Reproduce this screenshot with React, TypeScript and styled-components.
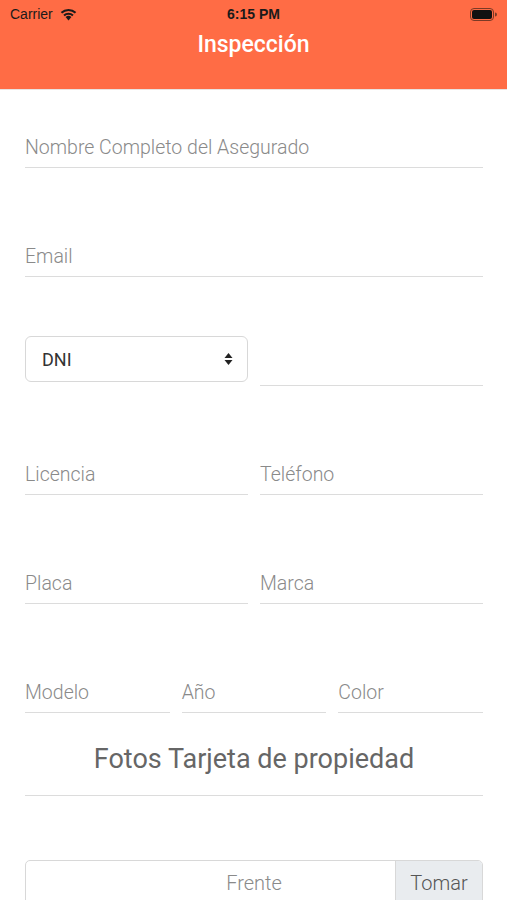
import React from 'react';
import styled, { createGlobalStyle } from 'styled-components';

const GlobalStyle = createGlobalStyle`
    html, body {
        margin: 0;
        padding: 0;
        background: #fff;
        font-family: Roboto, "Noto Sans", sans-serif;
    }
    * { box-sizing: border-box; }
`

const Page = styled.div`
    width: 507px;
    height: 900px;
    overflow: hidden;
    background: #fff;
`

const Header = styled.header`
    height: 90px;
    background: #ff6c45;
    border-bottom: 1px solid #e8e3e0;
    display: flex;
    flex-direction: column;
`

const StatusBar = styled.div`
    height: 28px;
    display: grid;
    grid-template-columns: 1fr auto 1fr;
    align-items: center;
    padding: 0 10px;
    color: #1a1a1a;
    font-family: "Liberation Sans", Arial, sans-serif;
    font-size: 14px;
    .left{
        display: flex;
        align-items: center;
        gap: 6px;
    }
    .time{
        font-weight: 700;
    }
    .right{
        display: flex;
        justify-content: flex-end;
    }
`

const Title = styled.h1`
    margin: 0;
    text-align: center;
    color: #fff;
    font-size: 23px;
    font-weight: 500;
    line-height: 34px;
`

const Form = styled.div`
    padding: 0 24px 0 25px;
`

const Row = styled.div<{ $cols: number; $top?: number }>`
    display: grid;
    grid-template-columns: repeat(${p => p.$cols}, 1fr);
    column-gap: 12px;
    align-items: end;
    margin-top: ${p => p.$top ?? 68}px;
`

const Field = styled.div`
    height: 41px;
    border-bottom: 1px solid #dcdcdc;
    display: flex;
    align-items: center;
    color: #8a8a8a;
    font-size: 19.5px;
    font-weight: 300;
    white-space: nowrap;
`

const Select = styled.div`
    height: 46px;
    margin-bottom: 4px;
    border: 1px solid #d8d8d8;
    border-radius: 6px;
    display: flex;
    align-items: center;
    justify-content: space-between;
    padding: 0 14px 0 16px;
    color: #333;
    font-size: 18px;
`

const SectionTitle = styled.h2`
    margin: 30px 0 0;
    padding-bottom: 20px;
    border-bottom: 1px solid #dcdcdc;
    text-align: center;
    color: #666;
    font-size: 27px;
    line-height: 32px;
    font-weight: 400;
`

const PhotoInput = styled.div`
    margin-top: 64px;
    height: 46px;
    border: 1px solid #d8d8d8;
    border-radius: 5px;
    display: flex;
    overflow: hidden;
    font-size: 20px;
    font-weight: 300;
    .name{
        flex: 1;
        display: flex;
        align-items: center;
        justify-content: center;
        padding-left: 87px;
        color: #8a8a8a;
    }
    .btn{
        width: 87px;
        background: #e9ecef;
        border-left: 1px solid #d8d8d8;
        display: flex;
        align-items: center;
        justify-content: center;
        color: #555;
    }
`

const Wifi = () => (
    <svg width="19" height="14" viewBox="0 0 17 13">
        <path d="M8.5 12.5 L5.8 9.4 A4 4 0 0 1 11.2 9.4 Z" fill="#1a1a1a" />
        <path d="M3.7 7.2 A7 7 0 0 1 13.3 7.2 L12 8.6 A5.2 5.2 0 0 0 5 8.6 Z" fill="#1a1a1a" />
        <path d="M1.3 4.6 A10.5 10.5 0 0 1 15.7 4.6 L14.4 6 A8.6 8.6 0 0 0 2.6 6 Z" fill="#1a1a1a" />
    </svg>
)

const Battery = () => (
    <svg width="27" height="13" viewBox="0 0 27 13">
        <rect x="0.5" y="0.5" width="23" height="12" rx="3.5" fill="none" stroke="#7a3a26" strokeWidth="1" />
        <rect x="2" y="2" width="20" height="9" rx="2" fill="#111" />
        <path d="M25 4.5 a1.8 1.8 0 0 1 0 4 Z" fill="#7a3a26" />
    </svg>
)

const Arrows = () => (
    <svg width="9" height="14" viewBox="0 0 9 14">
        <path d="M4.5 1 L8.5 6 H0.5 Z" fill="#222" />
        <path d="M4.5 13 L8.5 8 H0.5 Z" fill="#222" />
    </svg>
)

const App = () => {
    return <Page>
        <GlobalStyle />
        <Header>
            <StatusBar>
                <div className="left">Carrier <Wifi /></div>
                <div className="time">6:15 PM</div>
                <div className="right"><Battery /></div>
            </StatusBar>
            <Title>Inspección</Title>
        </Header>
        <Form>
            <Row $cols={1} $top={37}>
                <Field>Nombre Completo del Asegurado</Field>
            </Row>
            <Row $cols={1}>
                <Field>Email</Field>
            </Row>
            <Row $cols={2} $top={59}>
                <Select>DNI <Arrows /></Select>
                <Field />
            </Row>
            <Row $cols={2}>
                <Field>Licencia</Field>
                <Field>Teléfono</Field>
            </Row>
            <Row $cols={2}>
                <Field>Placa</Field>
                <Field>Marca</Field>
            </Row>
            <Row $cols={3}>
                <Field>Modelo</Field>
                <Field>Año</Field>
                <Field>Color</Field>
            </Row>
            <SectionTitle>Fotos Tarjeta de propiedad</SectionTitle>
            <PhotoInput>
                <div className="name">Frente</div>
                <div className="btn">Tomar</div>
            </PhotoInput>
        </Form>
    </Page>
}

export default App;
